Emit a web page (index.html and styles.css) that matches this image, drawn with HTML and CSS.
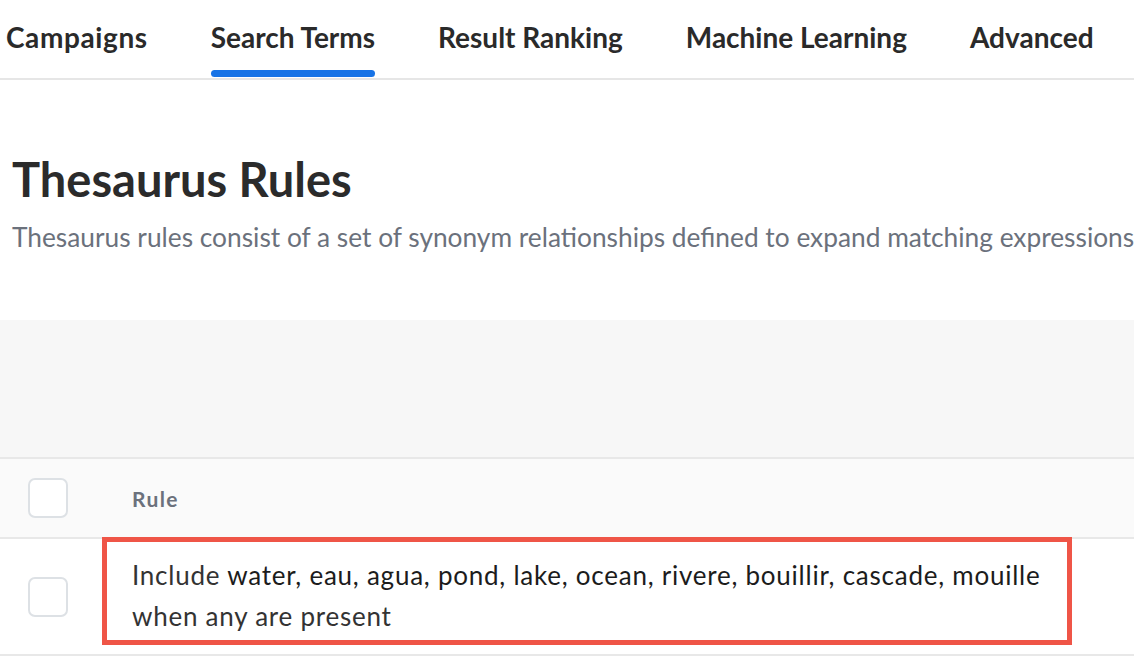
FILE: index.html
```html
<!DOCTYPE html>
<html lang="en">
<head>
<meta charset="utf-8">
<title>Thesaurus Rules</title>
<link rel="stylesheet" href="styles.css">
</head>
<body>
<nav class="tabs">
  <a class="tab tab--wide">Campaigns</a>
  <a class="tab tab--active">Search Terms</a>
  <a class="tab">Result Ranking</a>
  <a class="tab">Machine Learning</a>
  <a class="tab">Advanced</a>
</nav>
<header class="page-head">
  <h1 class="title">Thesaurus Rules</h1>
  <p class="subtitle">Thesaurus rules consist of a set of synonym relationships defined to expand matching expressions</p>
</header>
<section class="toolbar"></section>
<div class="table">
  <div class="row row--head">
    <div class="cell-check"><span class="checkbox"></span></div>
    <div class="cell-rule head-label">Rule</div>
  </div>
  <div class="row">
    <div class="cell-check"><span class="checkbox"></span></div>
    <div class="cell-rule">
      <div class="rule-text highlighted">Include <span class="terms">water, eau, agua, pond, lake, ocean, rivere, bouillir, cascade, mouille</span> when any are present</div>
    </div>
  </div>
</div>
</body>
</html>
```
FILE: styles.css
```css
html, body {
  margin: 0;
  padding: 0;
  background: #ffffff;
  font-family: "Lato", "Liberation Sans", sans-serif;
  color: #2b2b2b;
  overflow: hidden;
}

.tabs {
  display: flex;
  gap: 63px;
  padding-left: 6px;
  height: 78px;
  border-bottom: 2px solid #e6e6e6;
}

.tab {
  display: flex;
  flex-direction: column;
  padding-top: 20px;
  font-size: 28px;
  line-height: 34px;
  font-weight: 700;
  color: #2a2a2a;
  white-space: nowrap;
}

.tab--wide {
  letter-spacing: 0.6px;
}

.tab--active::after {
  content: "";
  display: block;
  height: 7px;
  margin-top: 16px;
  border-radius: 4px;
  background: #1773e6;
}

.page-head {
  padding: 0 12px;
}

.title {
  margin: 70px 0 0;
  font-size: 47px;
  line-height: 58px;
  font-weight: 700;
  color: #2b2b2b;
}

.subtitle {
  margin: 13px 0 0;
  font-size: 26.3px;
  line-height: 32px;
  color: #6b717c;
  white-space: nowrap;
}

.toolbar {
  margin-top: 67px;
  height: 137px;
  background: #f7f7f7;
  border-bottom: 2px solid #e8e8e8;
}

.row {
  display: flex;
  border-bottom: 2px solid #e8e8e8;
}

.row--head {
  height: 78px;
  align-items: center;
  background: #fafafa;
}

.cell-check {
  width: 102px;
  flex: none;
  padding-left: 28px;
  box-sizing: border-box;
  display: flex;
  align-items: center;
}

.checkbox {
  display: block;
  width: 40px;
  height: 40px;
  box-sizing: border-box;
  border: 2px solid #dde1e5;
  border-radius: 7px;
  background: #ffffff;
}

.cell-rule {
  flex: 1;
}

.head-label {
  padding-left: 30px;
  font-size: 21px;
  letter-spacing: 1.4px;
  font-weight: 700;
  color: #6b717c;
}

.rule-text {
  font-size: 26px;
  line-height: 41px;
  letter-spacing: 0.76px;
  color: #333333;
}

.highlighted {
  width: 970px;
  box-sizing: border-box;
  margin: -2px 0 9px;
  border: 5px solid #ef5547;
  padding: 13px 20px 3px 25px;
}

.terms {
  color: #1c1c1c;
}
```
